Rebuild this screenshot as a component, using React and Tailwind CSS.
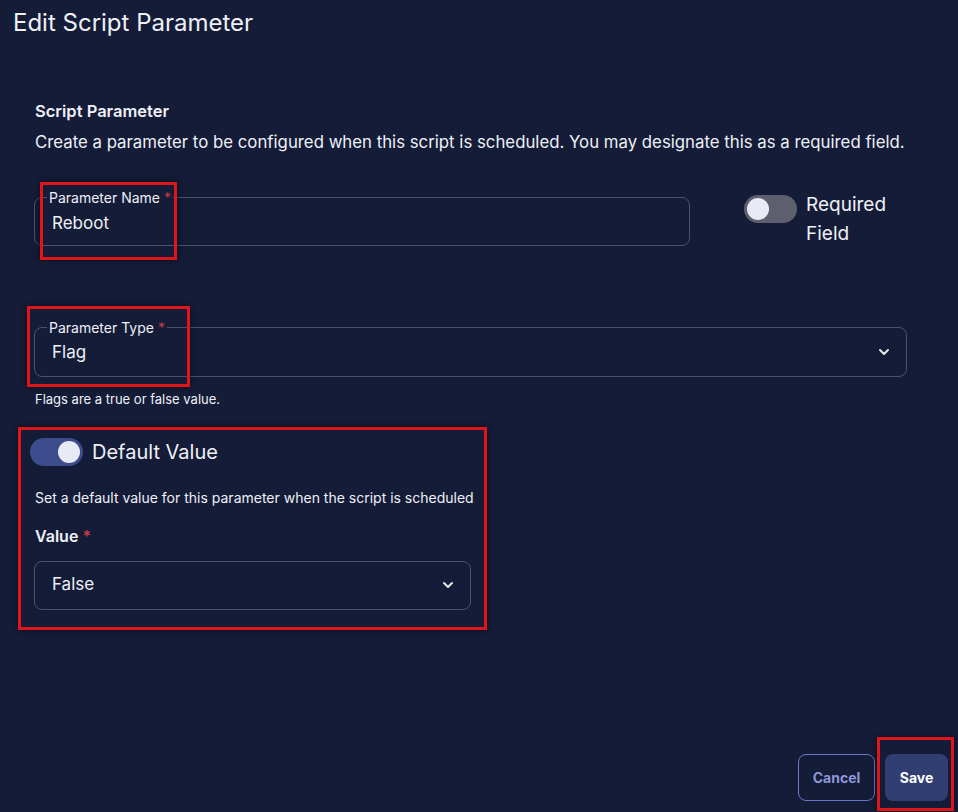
const font = { fontFamily: "Inter, 'Liberation Sans', sans-serif" };

function Chevron() {
  return (
    <svg width="16" height="16" viewBox="0 0 24 24" fill="none" stroke="#e5e7eb" strokeWidth="3" strokeLinecap="round" strokeLinejoin="round">
      <path d="M6 9l6 6 6-6" />
    </svg>
  );
}

function RedBox({ className }) {
  return <div className={"absolute border-[3px] border-[#e0141b] shadow-[0_0_6px_rgba(0,0,0,0.6)] pointer-events-none " + className} />;
}

export default function App() {
  return (
    <div style={font} className="relative w-[958px] h-[812px] bg-[#141c38] text-[#eef0f6] overflow-hidden">
      <h1 className="pl-[13px] pt-[9px] text-[24px] leading-7">Edit Script Parameter</h1>

      <div className="pl-[35px] pr-[40px] pt-[62px]">
        <div className="text-[16.5px] font-semibold leading-6">Script Parameter</div>
        <div className="mt-[7px] text-[16.8px] leading-6">Create a parameter to be configured when this script is scheduled. You may designate this as a required field.</div>

        <div className="flex items-start mt-[43px]">
          <div className="relative w-[656px] h-[49px] border border-[#4a5272] rounded-lg ml-[-1px]">
            <span className="absolute -top-[8px] left-[12px] px-[2px] bg-[#141c38] text-[14px] leading-4">
              Parameter Name <span className="text-[#c53a46]">*</span>
            </span>
            <div className="pl-[17px] pt-[13px] text-[17px]">Reboot</div>
          </div>
          <div className="flex ml-[54px] -mt-[2px] gap-[9px]">
            <div className="w-[53px] h-[28px] rounded-full bg-[#5d5f6e] flex items-center px-[3px]">
              <div className="w-[22px] h-[22px] rounded-full bg-[#e8ebf5]" />
            </div>
            <div className="text-[19px] leading-[29px] -mt-[5px]">Required<br />Field</div>
          </div>
        </div>

        <div className="relative mt-[79px] w-[873px] h-[50px] border border-[#4a5272] rounded-lg ml-[-1px] flex items-center justify-between pr-[14px]">
          <span className="absolute -top-[8px] left-[12px] px-[2px] bg-[#141c38] text-[14px] leading-4">
            Parameter Type <span className="text-[#c53a46]">*</span>
          </span>
          <div className="pl-[17px] pt-[2px] text-[17px]">Flag</div>
          <Chevron />
        </div>
        <div className="mt-[13px] text-[13px]">Flags are a true or false value.</div>

        <div className="flex items-center mt-[27px] ml-[-5px] gap-[9px]">
          <div className="w-[53px] h-[28px] rounded-full bg-[#3c4c8c] flex items-center justify-end px-[3px]">
            <div className="w-[22px] h-[22px] rounded-full bg-[#e8ebf5]" />
          </div>
          <div className="text-[20px]">Default Value</div>
        </div>
        <div className="mt-[20px] text-[14px]">Set a default value for this parameter when the script is scheduled</div>
        <div className="mt-[16px] text-[16px] font-semibold">Value <span className="text-[#c53a46]">*</span></div>
        <div className="mt-[13px] w-[437px] h-[49px] border border-[#4a5272] rounded-lg ml-[-1px] flex items-center justify-between pl-[17px] pr-[14px]">
          <span className="text-[17px]">False</span>
          <Chevron />
        </div>
      </div>

      <div className="absolute right-[10px] bottom-[11px] flex gap-[10px]">
        <button className="w-[77px] h-[47px] border border-[#6b77c8] rounded-lg text-[#8c96d6] text-[14px] font-bold">Cancel</button>
        <button className="w-[63px] h-[47px] rounded-lg bg-[#313e72] text-white text-[14px] font-bold">Save</button>
      </div>

      <RedBox className="left-[40px] top-[182px] w-[137px] h-[78px]" />
      <RedBox className="left-[27px] top-[306px] w-[163px] h-[81px]" />
      <RedBox className="left-[18px] top-[427px] w-[469px] h-[203px]" />
      <RedBox className="left-[877px] top-[737px] w-[77px] h-[74px]" />
    </div>
  );
}
